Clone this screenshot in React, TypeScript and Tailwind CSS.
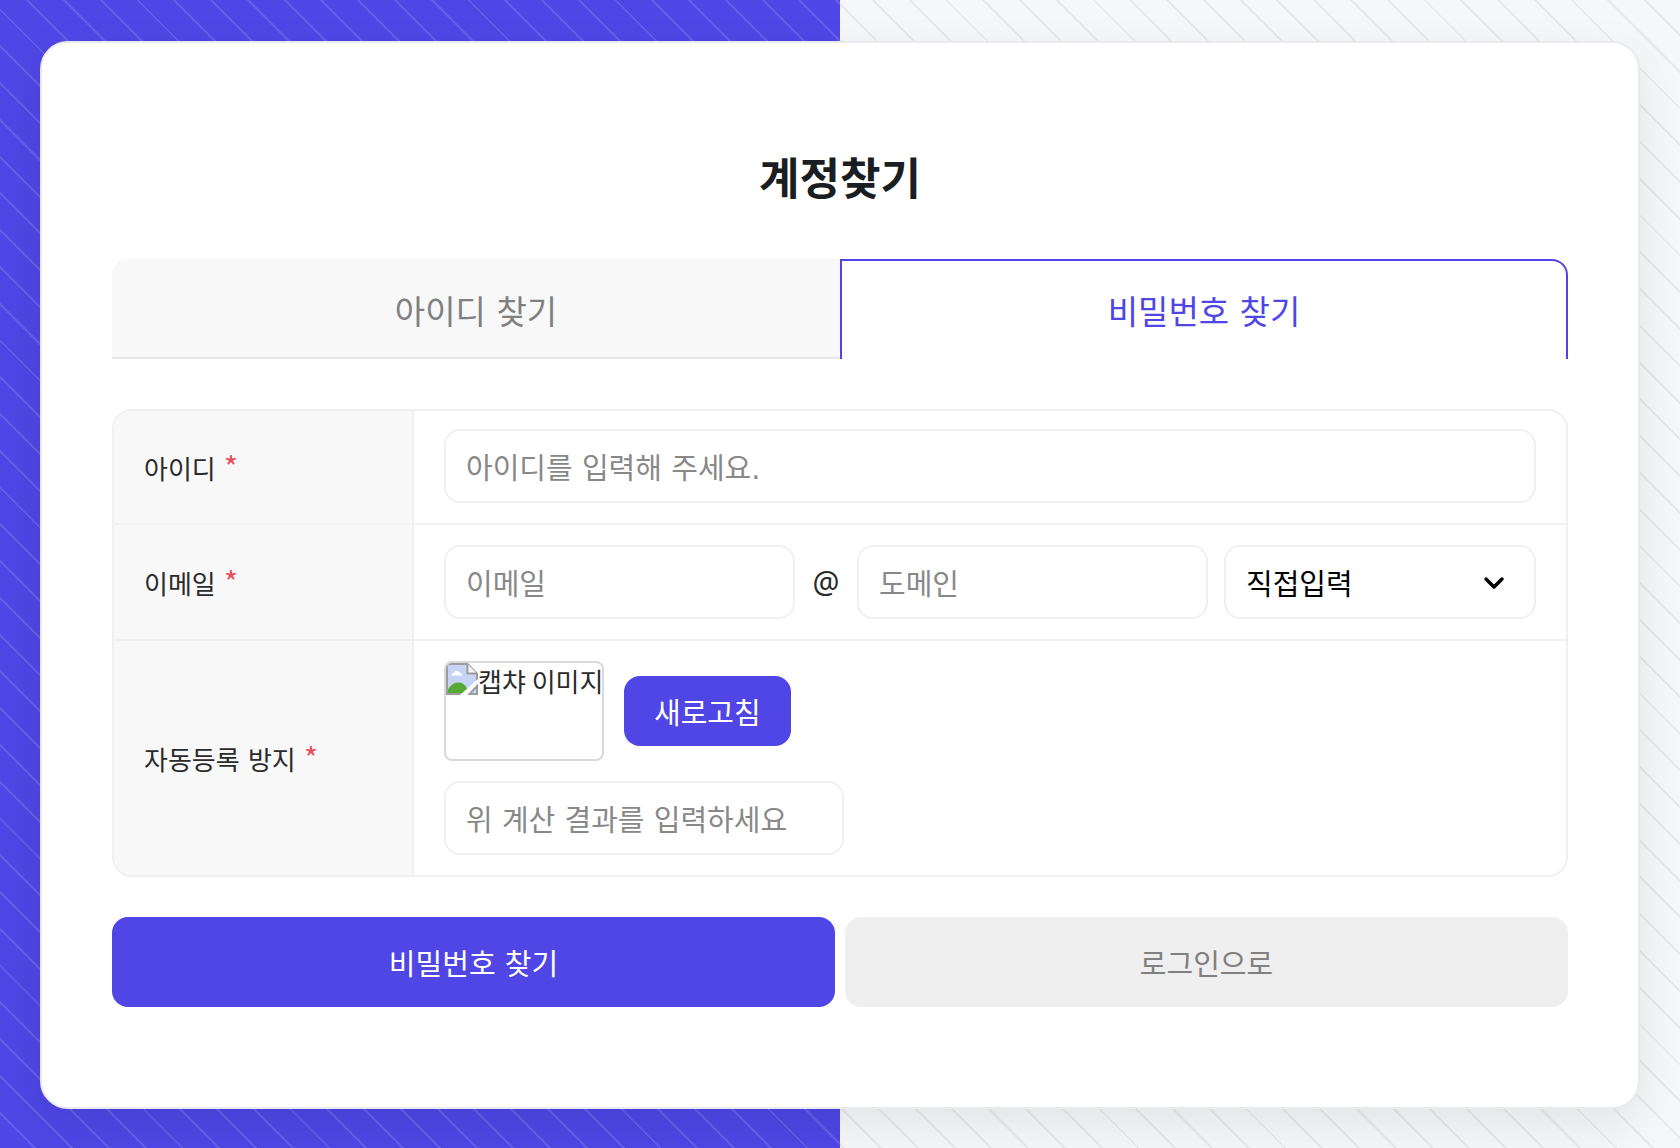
import { useState } from "react";
import type { InputHTMLAttributes, ReactNode } from "react";

const fieldClass =
  "h-[74px] min-w-0 rounded-2xl border-2 border-[#f0f0f0] bg-white px-5 pt-1.5 text-[29px] leading-10 text-black placeholder:text-[#888] outline-none focus:border-[#4f46e5]";

function Field({ className = "", ...props }: InputHTMLAttributes<HTMLInputElement>) {
  return <input {...props} className={`${fieldClass} ${className}`} />;
}

function Row({ label, htmlFor, children }: { label: string; htmlFor: string; children: ReactNode }) {
  return (
    <tr className="group">
      <th
        scope="row"
        className="w-[300px] border-r-2 border-b-2 border-[#f0f0f0] bg-[#f8f8f8] px-[30px] pt-1.5 text-left font-normal group-last:border-b-0"
      >
        <label htmlFor={htmlFor} className="text-[26px] leading-10 text-[#2b2b2b]">
          {label}{" "}
          <span className="font-['Noto_Sans_CJK_KR',sans-serif] text-[30px] leading-none text-[#e5505a]">*</span>
        </label>
      </th>
      <td className="border-b-2 border-[#f0f0f0] px-[30px] py-5 group-first:pt-[18px] group-last:border-b-0">
        {children}
      </td>
    </tr>
  );
}

function BrokenImageIcon() {
  return (
    <svg viewBox="0 0 16 16" className="size-8 shrink-0" aria-hidden="true">
      <path d="M.5.5h10.2L15.5 5.3v10.2H.5z" fill="#fff" stroke="#9c9c9c" />
      <path d="M1 1h9.700v4.300H15V15.500H1z" fill="#c6d5f5" />
      <path d="M2.800 6.200c0-.8.6-1.300 1.300-1.300.3-1.200 2-1.400 2.600-.1.800-.1 1.300.6 1.300 1.400z" fill="#fff" />
      <path d="M1 15.500v-2.200C2.600 10.600 4.600 9.700 6.600 9.800c2 .1 3.800 1.700 5 5.700z" fill="#55a935" />
      <path d="M.5 15.500h15" stroke="#9c9c9c" />
      <path d="M10.700.5v4.800h4.800" fill="#f4f4f4" stroke="#9c9c9c" />
      <path d="M16 8v2.800L10.800 16H7z" fill="#fff" />
      <path d="M11.800 15.500h3.700V11.500z" fill="#c6d5f5" stroke="#9c9c9c" />
    </svg>
  );
}

export default function App() {
  const [tab, setTab] = useState<"id" | "password">("password");
  const tabClass = (active: boolean) =>
    active
      ? "border-x-2 border-t-2 border-[#4f46e5] bg-white pt-1.5 text-[#4f46e5]"
      : "border-b-2 border-[#e8e8e8] bg-[#f8f8f8] pt-2.5 text-[#808080]";

  return (
    <div className="relative isolate min-h-screen bg-[linear-gradient(90deg,#4f46e5_50%,#f5f7f8_50%)] px-10 pt-[41px] pb-[39px] font-['DejaVu_Sans','Noto_Sans_CJK_KR',sans-serif]">
      <div className="absolute inset-0 -z-10 bg-[repeating-linear-gradient(45deg,transparent_0_24px,rgba(255,255,255,0.13)_24px_26px)] [clip-path:inset(0_50%_0_0)]" />
      <div className="absolute inset-0 -z-10 bg-[repeating-linear-gradient(45deg,transparent_0_24px,rgba(0,0,0,0.06)_24px_26px)] [clip-path:inset(0_0_0_50%)]" />
      <main className="rounded-[28px] border-2 border-[#e8eaee] bg-white px-[70px] py-[100px] shadow-[0_16px_48px_rgba(0,0,0,0.08)]">
        <h1 className="text-center font-['Noto_Sans_CJK_KR',sans-serif] text-[44px] leading-[66px] font-bold text-[#1a1d21]">
          계정찾기
        </h1>

        <div role="tablist" className="mt-[50px] grid h-[100px] grid-cols-2 text-[33px] leading-10">
          <button
            type="button"
            role="tab"
            aria-selected={tab === "id"}
            onClick={() => setTab("id")}
            className={`rounded-tl-2xl ${tabClass(tab === "id")}`}
          >
            아이디 찾기
          </button>
          <button
            type="button"
            role="tab"
            aria-selected={tab === "password"}
            onClick={() => setTab("password")}
            className={`rounded-tr-2xl ${tabClass(tab === "password")}`}
          >
            비밀번호 찾기
          </button>
        </div>

        <form onSubmit={(e) => e.preventDefault()}>
          <div className="mt-[50px] overflow-hidden rounded-[20px] border-2 border-[#f0f0f0]">
            <table className="w-full table-fixed border-separate border-spacing-0">
              <tbody>
                <Row label="아이디" htmlFor="user-id">
                  <Field id="user-id" type="text" placeholder="아이디를 입력해 주세요." className="block w-full" />
                </Row>
                <Row label="이메일" htmlFor="email">
                  <div className="flex items-center">
                    <Field id="email" type="text" placeholder="이메일" className="flex-1" />
                    <span className="w-[62px] text-center font-['Noto_Sans',sans-serif] text-[30px] leading-10 text-[#2b2b2b]">
                      @
                    </span>
                    <Field type="text" aria-label="도메인" placeholder="도메인" className="flex-1" />
                    <div className="relative ml-4 w-[312px]">
                      <select aria-label="도메인 선택" className={`${fieldClass} w-full appearance-none`}>
                        <option>직접입력</option>
                        <option>naver.com</option>
                        <option>gmail.com</option>
                      </select>
                      <svg
                        viewBox="0 0 24 24"
                        className="pointer-events-none absolute top-[26px] right-[30px] size-6"
                        fill="none"
                        stroke="#000"
                        strokeWidth="3.5"
                        strokeLinecap="round"
                        strokeLinejoin="round"
                        aria-hidden="true"
                      >
                        <path d="m4 8 8 8 8-8" />
                      </svg>
                    </div>
                  </div>
                </Row>
                <Row label="자동등록 방지" htmlFor="captcha">
                  <div className="flex items-center gap-5">
                    <div
                      role="img"
                      aria-label="캡챠 이미지"
                      className="flex h-[100px] w-[160px] items-start overflow-hidden rounded-lg border-2 border-[#d9d9d9] font-['Noto_Sans_CJK_KR',sans-serif] text-[26px] leading-9 whitespace-nowrap text-[#2b2b2b]"
                    >
                      <BrokenImageIcon />
                      캡챠 이미지
                    </div>
                    <button
                      type="button"
                      className="h-[70px] rounded-2xl bg-[#4f46e5] px-[30px] pt-1.5 text-[29px] leading-10 text-white"
                    >
                      새로고침
                    </button>
                  </div>
                  <Field
                    id="captcha"
                    type="text"
                    placeholder="위 계산 결과를 입력하세요"
                    className="mt-5 block w-[400px]"
                  />
                </Row>
              </tbody>
            </table>
          </div>

          <div className="mt-10 grid grid-cols-2 gap-2.5 text-[29px] leading-10">
            <button type="submit" className="h-[90px] rounded-2xl bg-[#4f46e5] pt-1.5 text-white">
              비밀번호 찾기
            </button>
            <button type="button" className="h-[90px] rounded-2xl bg-[#efefef] pt-1.5 text-[#808080]">
              로그인으로
            </button>
          </div>
        </form>
      </main>
    </div>
  );
}
